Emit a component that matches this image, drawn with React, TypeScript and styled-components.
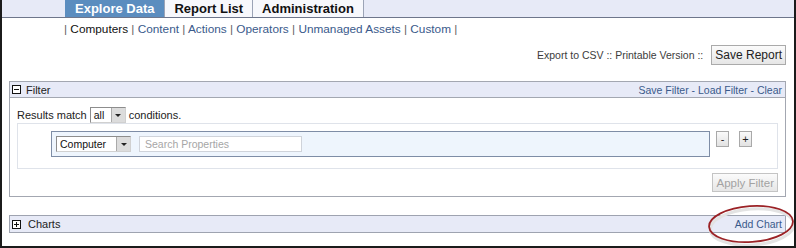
import React from 'react';
import styled, { createGlobalStyle } from 'styled-components';

const Lavender = '#e7eaf7';
const PanelLine = '#a3a7b1';
const LinkBlue = '#3a5a8b';

const GlobalStyle = createGlobalStyle`
  body {
    margin: 0;
    font-family: "Liberation Sans", Arial, sans-serif;
    background: #fff;
  }
`;

const Frame = styled.div`
  position: relative;
  width: 796px;
  height: 248px;
  box-sizing: border-box;
  border: 2px solid #1b1b1b;
  border-top: none;
  background: #fff;
  overflow: hidden;
`;

const TopNav = styled.div`
  display: flex;
  height: 17px;
  padding-left: 63px;
  background: ${Lavender};
  border-bottom: 1px solid #6e768b;
`;

const Tab = styled.div<{ $active?: boolean }>`
  padding: ${(p) => (p.$active ? '0 10px' : '0 9px')};
  font-size: 13px;
  font-weight: bold;
  line-height: 17px;
  color: ${(p) => (p.$active ? '#fff' : '#111')};
  background: ${(p) => (p.$active ? '#5b8dbf' : '#f7f8fc')};
  border-right: 1px solid #9ca4b6;
`;

const SubNav = styled.div`
  margin: 4px 0 0 62px;
  font-size: 11.8px;
  line-height: 14px;
  color: #666;
`;

const SubLink = styled.span<{ $current?: boolean }>`
  color: ${(p) => (p.$current ? '#111' : LinkBlue)};
`;

const ActionBar = styled.div`
  display: flex;
  justify-content: flex-end;
  align-items: center;
  gap: 8px;
  margin-top: 9px;
  padding-right: 8px;
  font-size: 10.5px;
  color: #3c3c3c;
`;

const Button = styled.button<{ $disabled?: boolean }>`
  height: 20px;
  padding: 0 3px;
  font-family: inherit;
  font-size: 12px;
  color: ${(p) => (p.$disabled ? '#a2a2a2' : '#222')};
  border: 1px solid ${(p) => (p.$disabled ? '#c4c4c4' : '#aaa')};
  background: linear-gradient(#fbfbfb, #e6e6e6);
`;

const Panel = styled.section<{ $gap: number }>`
  margin: ${(p) => p.$gap}px 8px 0 7px;
  border: 1px solid ${PanelLine};
`;

const PanelHeader = styled.div<{ $height: number }>`
  display: flex;
  align-items: center;
  justify-content: space-between;
  height: ${(p) => p.$height}px;
  padding: 0 3px 0 2px;
  background: ${Lavender};
  font-size: 11px;
  color: #222;
`;

const FilterHeader = styled(PanelHeader)`
  border-bottom: 1px solid ${PanelLine};
`;

const HeaderTitle = styled.div`
  display: flex;
  align-items: center;
  gap: 5px;
`;

const HeaderLinks = styled.div`
  font-size: 10.5px;
  color: ${LinkBlue};
`;

const PanelBody = styled.div`
  padding: 9px 7px 4px 7px;
`;

const MatchRow = styled.div`
  display: flex;
  align-items: center;
  gap: 3px;
  height: 16px;
  font-size: 11px;
  color: #222;
`;

const Select = styled.div<{ $width: number }>`
  display: flex;
  align-items: stretch;
  width: ${(p) => p.$width}px;
  height: 16px;
  box-sizing: border-box;
  border: 1px solid #8d8d8d;
  border-right-color: #d0d0d0;
  border-bottom-color: #d0d0d0;
  background: #fff;
  font-size: 10.5px;
`;

const SelectText = styled.div`
  flex: 1;
  padding-left: 3px;
  line-height: 14px;
  color: #111;
`;

const SelectArrow = styled.div`
  display: flex;
  align-items: center;
  justify-content: center;
  width: 13px;
  background: #dcdcdc;
  border-left: 1px solid #aaa;
  &::after {
    content: '';
    border-left: 3px solid transparent;
    border-right: 3px solid transparent;
    border-top: 3px solid #222;
  }
`;

const ConditionGroup = styled.div`
  padding: 7px 0 11px 33px;
  border: 1px solid #dfe3ea;
`;

const ConditionRow = styled.div`
  display: flex;
  align-items: flex-start;
  gap: 6px;
`;

const ConditionBox = styled.div`
  display: flex;
  align-items: center;
  gap: 8px;
  width: 659px;
  height: 26px;
  box-sizing: border-box;
  padding: 0 4px;
  border: 1px solid #7e8da6;
  background: #eef5fd;
`;

const SearchInput = styled.div`
  width: 163px;
  height: 16px;
  box-sizing: border-box;
  padding-left: 5px;
  border: 1px solid #cfd3da;
  background: #fff;
  font-size: 10.5px;
  line-height: 14px;
  color: #a6a6a6;
`;

const MiniButton = styled.div`
  width: 13px;
  height: 16px;
  box-sizing: border-box;
  border: 1px solid #a9a9a9;
  background: linear-gradient(#fafafa, #e2e2e2);
  font-size: 11px;
  line-height: 14px;
  text-align: center;
  color: #222;
  & + & {
    margin-left: 4px;
  }
`;

const ApplyRow = styled.div`
  display: flex;
  justify-content: flex-end;
  margin-top: 4px;
  & > button {
    height: 19px;
    font-size: 11.5px;
  }
`;

const ChartsPanel = styled(Panel)`
  border-color: #9ea3b0;
`;

const Annotation = styled.svg`
  position: absolute;
  left: 700px;
  top: 200px;
  pointer-events: none;
`;

const ToggleIcon = ({ open }: { open: boolean }) => (
  <svg width="9" height="9" viewBox="0 0 9 9">
    <rect x="0.5" y="0.5" width="8" height="8" fill="#fff" stroke="#111" />
    <rect x="2" y="4" width="5" height="1" fill="#111" />
    {!open && <rect x="4" y="2" width="1" height="5" fill="#111" />}
  </svg>
);

const subItems = ['Computers', 'Content', 'Actions', 'Operators', 'Unmanaged Assets', 'Custom'];

export default function App() {
  return (
    <>
      <GlobalStyle />
      <Frame>
        <TopNav>
          <Tab $active>Explore Data</Tab>
          <Tab>Report List</Tab>
          <Tab>Administration</Tab>
        </TopNav>

        <SubNav>
          |{' '}
          {subItems.map((item, i) => (
            <React.Fragment key={item}>
              <SubLink $current={i === 0}>{item}</SubLink> |{' '}
            </React.Fragment>
          ))}
        </SubNav>

        <ActionBar>
          <span>Export to CSV :: Printable Version ::</span>
          <Button>Save Report</Button>
        </ActionBar>

        <Panel $gap={16}>
          <FilterHeader $height={15}>
            <HeaderTitle>
              <ToggleIcon open />
              Filter
            </HeaderTitle>
            <HeaderLinks>Save Filter - Load Filter - Clear</HeaderLinks>
          </FilterHeader>
          <PanelBody>
            <MatchRow>
              Results match
              <Select $width={36}>
                <SelectText>all</SelectText>
                <SelectArrow />
              </Select>
              conditions.
            </MatchRow>
            <ConditionGroup>
              <ConditionRow>
                <ConditionBox>
                  <Select $width={75}>
                    <SelectText>Computer</SelectText>
                    <SelectArrow />
                  </Select>
                  <SearchInput>Search Properties</SearchInput>
                </ConditionBox>
                <MiniButton>-</MiniButton>
                <MiniButton>+</MiniButton>
              </ConditionRow>
            </ConditionGroup>
            <ApplyRow>
              <Button $disabled>Apply Filter</Button>
            </ApplyRow>
          </PanelBody>
        </Panel>

        <ChartsPanel $gap={18}>
          <PanelHeader $height={16}>
            <HeaderTitle>
              <ToggleIcon open={false} />
              <span style={{ marginLeft: 2 }}>Charts</span>
            </HeaderTitle>
            <HeaderLinks>Add Chart</HeaderLinks>
          </PanelHeader>
        </ChartsPanel>

        <Annotation width="96" height="48" viewBox="0 0 96 48">
          <ellipse
            cx="49"
            cy="25"
            rx="42"
            ry="18"
            fill="none"
            stroke="#e3e3e3"
            strokeWidth="3"
            transform="rotate(-4 49 25) translate(1 2)"
          />
          <ellipse
            cx="49"
            cy="24"
            rx="42"
            ry="18"
            fill="none"
            stroke="#9b2226"
            strokeWidth="1.8"
            transform="rotate(-4 49 24)"
          />
        </Annotation>
      </Frame>
    </>
  );
}
